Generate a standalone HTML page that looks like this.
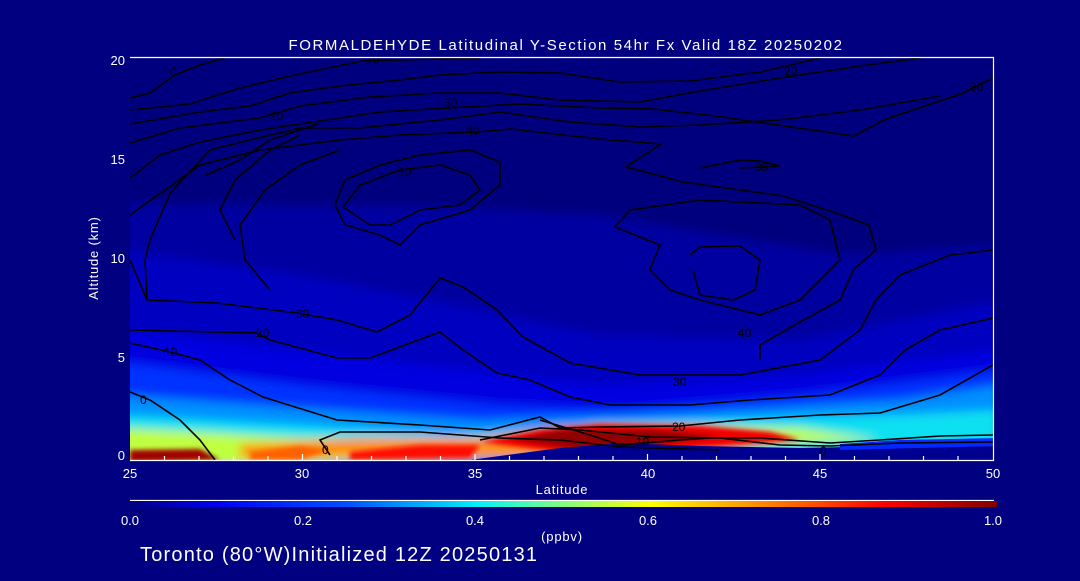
<!DOCTYPE html>
<html><head><meta charset="utf-8"><style>
html,body{margin:0;padding:0;background:#000080;}
body{width:1080px;height:576px;overflow:hidden;font-family:"Liberation Sans",sans-serif;}
</style></head><body>
<svg width="1080" height="576" viewBox="0 0 1080 576" xmlns="http://www.w3.org/2000/svg" font-family="Liberation Sans, sans-serif">
<defs>
<clipPath id="pc"><rect x="130" y="58" width="863" height="402"/></clipPath>
<filter id="bl" x="-20%" y="-20%" width="140%" height="140%"><feGaussianBlur stdDeviation="5"/></filter>
<filter id="bl2" x="-20%" y="-20%" width="140%" height="140%"><feGaussianBlur stdDeviation="2.5"/></filter>
<linearGradient id="cb" x1="0" x2="1" y1="0" y2="0">
<stop offset="0" stop-color="#000080"/><stop offset="0.1" stop-color="#0000f0"/>
<stop offset="0.25" stop-color="#0050ff"/><stop offset="0.4" stop-color="#00f0ff"/>
<stop offset="0.5" stop-color="#80ff80"/><stop offset="0.6" stop-color="#ffff00"/>
<stop offset="0.72" stop-color="#ff9000"/><stop offset="0.87" stop-color="#ff0000"/>
<stop offset="1" stop-color="#800000"/></linearGradient>
</defs>
<rect width="1080" height="576" fill="#000080"/>
<text x="566" y="50" fill="#fff" font-size="15" letter-spacing="1.6" text-anchor="middle">FORMALDEHYDE Latitudinal Y-Section 54hr  Fx Valid 18Z 20250202</text>
<g clip-path="url(#pc)">
<rect x="130" y="58" width="863" height="402" fill="#00007e"/>
<g filter="url(#bl)">
<polygon points="120,203 450,207 600,215 750,240 850,255 1000,245 1000,470 120,470" fill="#0000a0"/>
<polygon points="120,250 300,275 430,300 600,335 800,340 1000,300 1000,470 120,470" fill="#0000c0"/>
<polygon points="120,330 250,345 420,365 600,385 800,375 1000,350 1000,470 120,470" fill="#0000e0"/>
<polygon points="120,362 300,385 500,405 620,410 800,395 1000,370 1000,470 120,470" fill="#0030ff"/>
<polygon points="120,395 300,408 480,420 700,412 900,400 1000,385 1000,450 120,470" fill="#0090ff"/>
<polygon points="120,415 300,425 450,435 700,420 900,415 1000,410 1000,445 120,470" fill="#10e0f0"/>
<polygon points="120,428 200,432 300,438 480,440 600,425 800,428 880,440 120,470" fill="#c0ff40"/>
<polygon points="240,445 360,438 480,438 560,428 700,426 800,438 700,450 500,458 240,458" fill="#ff9000"/>
</g>
<g filter="url(#bl2)">
<polygon points="480,442 540,430 600,424 700,426 770,432 800,440 720,446 620,452 560,452" fill="#f00000"/>
<polygon points="510,440 560,430 650,430 720,436 650,446 570,448" fill="#900000"/>
<polygon points="130,450 200,449 220,460 130,462" fill="#a00000"/>
<polygon points="350,452 420,445 480,445 470,458 350,460" fill="#ff1000"/>
<polygon points="250,452 300,446 330,450 300,460 250,460" fill="#ff6000"/>
</g>
<polygon points="470,460 560,448 620,443 700,446 800,448 900,446 1000,444 1000,462 470,462" fill="#000090"/>
<polygon points="840,444 900,440 1000,438 1000,446 840,450" fill="#0028ff"/>
<g fill="none" stroke="#000" stroke-width="1.6">
<polyline points="130,98 150,93 175,75 200,65 225,58"/>
<polyline points="130,110 190,104 240,88 290,76 362,61 400,60 480,58"/>
<polyline points="130,124 200,112 250,106 290,93 340,86 400,80 440,75 500,72 560,73 620,82 690,81 760,72 820,58"/>
<polyline points="130,143 180,128 260,118 300,106 370,97 440,93 500,93 560,100 640,102 700,91 780,78 860,66 920,58"/>
<polyline points="130,178 160,155 200,142 260,130 320,121 380,112 447,108 520,104 600,108 654,109 715,116 854,136 886,119 961,94 993,78"/>
<polyline points="130,215 200,165 260,150 340,140 400,135 476,132 511,129 600,139 661,144 626,167 683,182 783,196 833,212 869,225 876,250 854,269 840,300 800,322 760,345 760,360"/>
<polyline points="147,300 145,260 150,240 165,205 170,193 210,150 250,140 300,128 360,128 440,120 500,112 570,122 640,127 700,125 780,120 860,110 940,96"/>
<polyline points="130,260 147,300 217,303 297,313 337,320 377,332 410,315 440,278 463,287 497,310 523,337 570,363 640,375 740,375 820,360 860,330 876,300 900,275 950,255 993,250"/>
<polyline points="130,330 257,333 270,340 337,358 370,358 440,332 463,350 497,373 530,380 570,397 610,405 690,405 750,400 830,395 880,375 905,350 940,330 993,318"/>
<polyline points="130,343 170,352 200,360 230,380 263,397 337,420 420,425 490,430 540,417 560,428 600,427 680,426 740,420 820,415 880,413 940,395 993,365"/>
<polyline points="130,392 150,400 180,420 200,440 215,460"/>
<polyline points="206,175 240,160 270,140 320,123"/>
<polyline points="235,240 220,210 235,180 270,150 300,135"/>
<polyline points="270,290 245,260 240,225 265,190 300,165 340,150"/>
<polyline points="343,207 360,185 400,170 440,165 470,175 480,190 460,205 420,210 390,225 370,225 343,207"/>
<polyline points="335,205 345,180 380,165 420,155 470,150 500,162 500,185 470,210 420,225 400,245 380,235 345,225 335,205"/>
<polyline points="615,227 630,210 700,200 800,205 830,220 840,260 800,300 760,315 700,300 670,290 650,270 660,245 615,227"/>
<polyline points="690,255 700,247 740,246 760,260 755,290 733,300 700,295 693,270"/>
<polyline points="700,168 740,160 760,161 780,166 740,168"/>
<polyline points="540,420 590,435 620,445 680,440 710,438 760,438 830,443 880,440 940,436 993,435"/>
<polyline points="480,440 540,428 580,430 650,437 720,438 780,445 830,446 900,443 993,442"/>
<polyline points="330,455 320,440 340,432 420,432 500,438 560,440 620,447 720,450"/>
</g>
<text x="170" y="76" font-size="12" fill="#000">0</text>
<text x="366" y="64" font-size="12" fill="#000">10</text>
<text x="270" y="120" font-size="12" fill="#000">20</text>
<text x="444" y="107" font-size="12" fill="#000">30</text>
<text x="466" y="135" font-size="12" fill="#000">40</text>
<text x="398" y="176" font-size="12" fill="#000">50</text>
<text x="296" y="318" font-size="12" fill="#000">30</text>
<text x="256" y="337" font-size="12" fill="#000">20</text>
<text x="164" y="356" font-size="12" fill="#000">10</text>
<text x="140" y="404" font-size="12" fill="#000">0</text>
<text x="322" y="454" font-size="12" fill="#000">0</text>
<text x="673" y="386" font-size="12" fill="#000">30</text>
<text x="672" y="431" font-size="12" fill="#000">20</text>
<text x="636" y="446" font-size="12" fill="#000">10</text>
<text x="820" y="455" font-size="12" fill="#000">0</text>
<text x="755" y="171" font-size="12" fill="#000">30</text>
<text x="970" y="91" font-size="12" fill="#000">30</text>
<text x="784" y="75" font-size="12" fill="#000">20</text>
<text x="738" y="337" font-size="12" fill="#000">40</text>
</g>
<g stroke="#fff" stroke-width="1.2" fill="none">
<line x1="130" y1="57.5" x2="994" y2="57.5"/>
<line x1="993.5" y1="57" x2="993.5" y2="461"/>
<line x1="130" y1="460.5" x2="994" y2="460.5"/>
<path d="M164.5 460v-4M199 460v-4M233.5 460v-4M268 460v-4M302.5 460v-6M337 460v-4M371.5 460v-4M406 460v-4M440.5 460v-4M475 460v-6M509.5 460v-4M544 460v-4M578.5 460v-4M613 460v-4M647.5 460v-6M682 460v-4M716.5 460v-4M751 460v-4M785.5 460v-4M820 460v-6M854.5 460v-4M889 460v-4M923.5 460v-4M958 460v-4"/>
<line x1="130" y1="500.5" x2="994" y2="500.5"/>
</g>
<g fill="#fff" font-size="13">
<text x="125" y="65" text-anchor="end">20</text>
<text x="125" y="164" text-anchor="end">15</text>
<text x="125" y="263" text-anchor="end">10</text>
<text x="125" y="362" text-anchor="end">5</text>
<text x="125" y="460" text-anchor="end">0</text>
<g text-anchor="middle">
<text x="130" y="478">25</text><text x="302" y="478">30</text><text x="475" y="478">35</text>
<text x="648" y="478">40</text><text x="820" y="478">45</text><text x="993" y="478">50</text>
</g>
<text x="562" y="494" text-anchor="middle" letter-spacing="0.8">Latitude</text>
<text transform="translate(98,258) rotate(-90)" text-anchor="middle" letter-spacing="0.8">Altitude (km)</text>
<g text-anchor="middle">
<text x="130" y="525">0.0</text><text x="303" y="525">0.2</text><text x="475" y="525">0.4</text>
<text x="648" y="525">0.6</text><text x="821" y="525">0.8</text><text x="993" y="525">1.0</text>
</g>
<text x="562" y="541" text-anchor="middle" letter-spacing="0.8">(ppbv)</text>
<text x="140" y="561" font-size="20" letter-spacing="1.2">Toronto (80°W)Initialized 12Z 20250131</text>
</g>
<rect x="130" y="501" width="867" height="6" fill="url(#cb)"/>
</svg>
</body></html>
